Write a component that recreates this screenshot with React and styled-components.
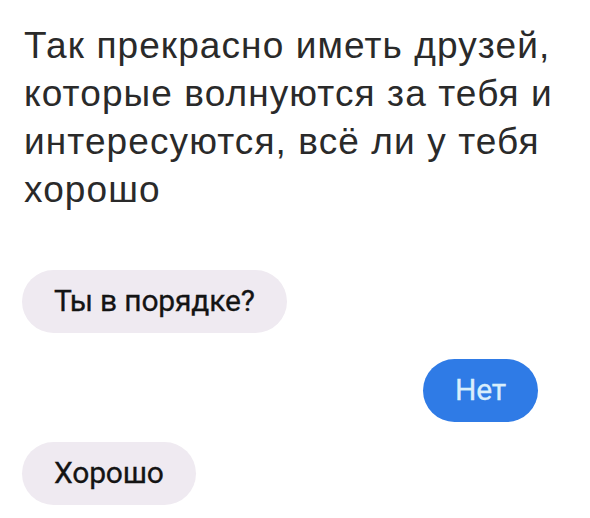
import React from "react";
import styled, { createGlobalStyle } from "styled-components";

const Global = createGlobalStyle`
  html, body { margin: 0; padding: 0; background: #ffffff; }
  body { width: 590px; height: 518px; overflow: hidden; }
`;

const Page = styled.div`
  width: 590px;
  height: 518px;
  box-sizing: border-box;
  padding: 22px 0 0 24px;
  display: flex;
  flex-direction: column;
  background: #fff;
`;

const Caption = styled.p`
  margin: 0;
  width: 562px;
  font-family: "Liberation Sans", Arial, sans-serif;
  font-size: 37px;
  line-height: 48px;
  color: #2a2a2a;
  letter-spacing: 1.1px;
`;

const Thread = styled.div`
  margin-top: 56px;
  display: flex;
  flex-direction: column;
  padding-right: 52px;
  margin-left: -2px;
`;

const Bubble = styled.div`
  align-self: ${(p) => (p.$mine ? "flex-end" : "flex-start")};
  margin-top: ${(p) => p.$gap}px;
  height: 63px;
  box-sizing: border-box;
  padding: 0 32px 2px;
  border-radius: 32px;
  display: flex;
  align-items: center;
  background: ${(p) => (p.$mine ? "#2f7be6" : "#efeaf1")};
  color: ${(p) => (p.$mine ? "#d9eefc" : "#141414")};
  font-family: Roboto, "Noto Sans", sans-serif;
  font-size: 30px;
  font-weight: 400;
  letter-spacing: -0.2px;
  -webkit-text-stroke: 0.3px currentColor;
`;

export default function App() {
  return (
    <>
      <Global />
      <Page>
        <Caption>
          Так прекрасно иметь друзей, которые волнуются за тебя и
          интересуются, всё ли у тебя хорошо
        </Caption>
        <Thread>
          <Bubble $gap={0}>Ты в порядке?</Bubble>
          <Bubble $mine $gap={26}>Нет</Bubble>
          <Bubble $gap={20}>Хорошо</Bubble>
        </Thread>
      </Page>
    </>
  );
}
